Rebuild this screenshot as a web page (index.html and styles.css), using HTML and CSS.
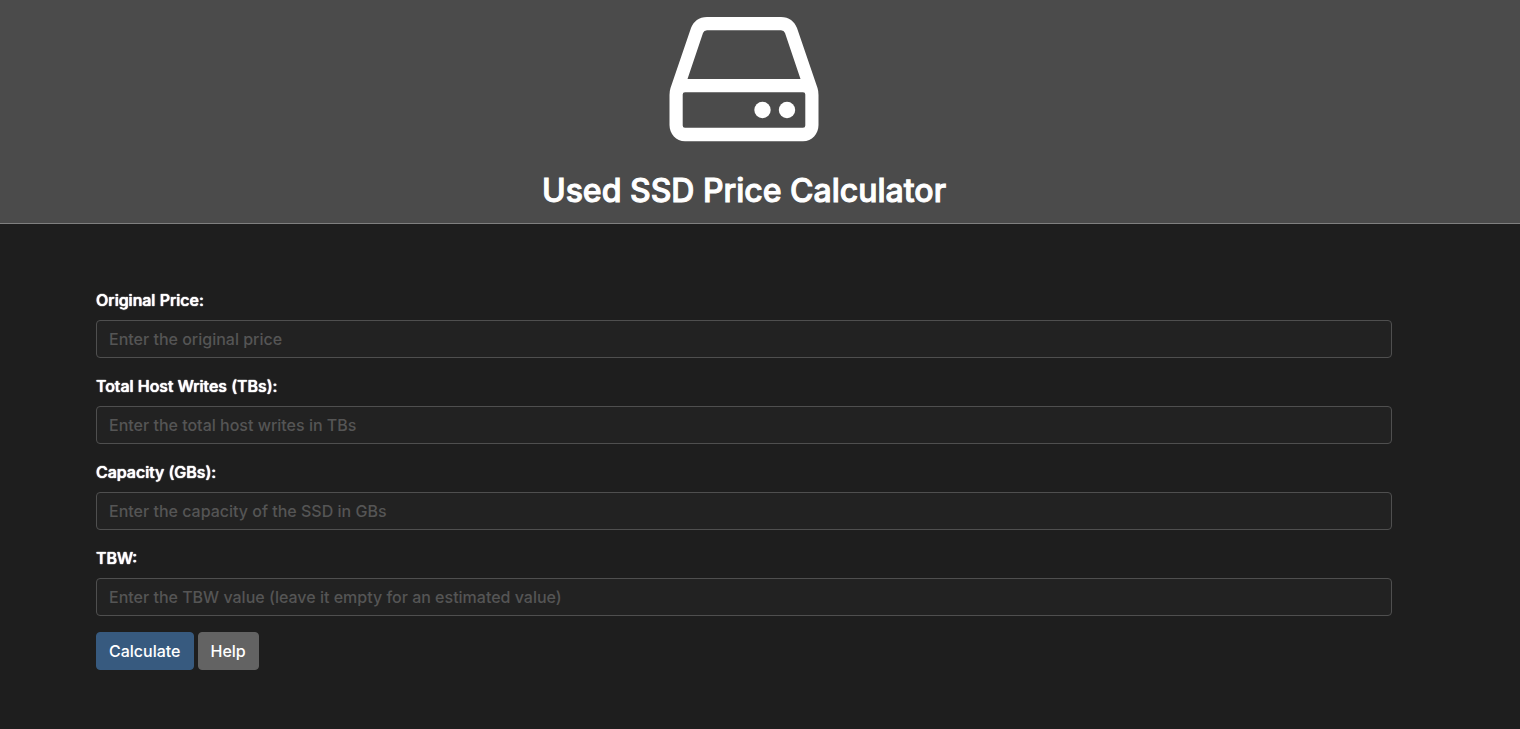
FILE: index.html
```
<!DOCTYPE html>
<html lang="en">
<head>
<meta charset="utf-8">
<title>Used SSD Price Calculator</title>
<link rel="stylesheet" href="styles.css">
</head>
<body>
<header class="header">
  <svg class="logo" viewBox="0 0 150 126" aria-hidden="true">
    <path class="logo-case" fill-rule="evenodd" d="M38 1 H112 C120 1 125.500 5.500 128 12 L148.500 72 Q149.500 75 149.500 79 V109 C149.500 118 143 125.300 134 125.300 H16 C7 125.300 .5 118 .5 109 V79 Q.5 75 1.500 72 L22 12 C24.500 5.500 30 1 38 1 Z M38 14.300 Q35 14.300 34 17 L18.500 63 H131.500 L116 17 Q115 14.300 112 14.300 Z M16 76.300 Q13.700 76.300 13.700 78.500 V109.500 Q13.700 111.800 16 111.800 H134 Q136.300 111.800 136.300 109.500 V78.500 Q136.300 76.300 134 76.300 Z"/>
    <circle class="logo-light" cx="93.500" cy="94" r="8.200"/>
    <circle class="logo-light" cx="118" cy="94" r="8.200"/>
  </svg>
  <h1 class="title">Used SSD Price Calculator</h1>
</header>
<main class="content">
  <form class="form">
    <div class="field">
      <label class="label" for="price">Original Price:</label>
      <input class="input" id="price" type="text" placeholder="Enter the original price">
    </div>
    <div class="field">
      <label class="label" for="writes">Total Host Writes (TBs):</label>
      <input class="input" id="writes" type="text" placeholder="Enter the total host writes in TBs">
    </div>
    <div class="field">
      <label class="label" for="capacity">Capacity (GBs):</label>
      <input class="input" id="capacity" type="text" placeholder="Enter the capacity of the SSD in GBs">
    </div>
    <div class="field">
      <label class="label" for="tbw">TBW:</label>
      <input class="input" id="tbw" type="text" placeholder="Enter the TBW value (leave it empty for an estimated value)">
    </div>
    <div class="actions">
      <button class="button button-primary" type="button">Calculate</button>
      <button class="button button-secondary" type="button">Help</button>
    </div>
  </form>
</main>
</body>
</html>
```
FILE: styles.css
```
* { box-sizing: border-box; }
body {
  margin: 0;
  min-height: 100vh;
  background: #1e1e1e;
  color: #fff;
  font: 500 16px/24px Inter, sans-serif;
}
.header {
  display: flex;
  flex-direction: column;
  align-items: center;
  gap: 28px;
  padding: 16px 32px 12px 0;
  background: #4b4b4b;
  border-bottom: 1px solid #808080;
}
.logo { display: block; width: 150px; height: 126px; }
.logo-case, .logo-light { fill: #fff; }
.title { margin: 0; font-size: 32px; line-height: 41px; font-weight: 500; -webkit-text-stroke: 1px #fff; }
.content { padding: 64px 128px 58px 96px; }
.field { margin-bottom: 16px; }
.label { display: block; margin-bottom: 8px; text-shadow: 0 0 1px #fff, 0 0 1px #fff; }
.input {
  display: block;
  width: 100%;
  height: 38px;
  padding: 6px 12px;
  border: 1px solid #4f4f4f;
  border-radius: 4px;
  background: #222;
  color: #fff;
  font: inherit;
}
.input::placeholder { color: #555; opacity: 1; }
.actions { display: flex; gap: 4px; }
.button {
  height: 38px;
  padding: 6px 12px;
  border: 1px solid transparent;
  border-radius: 4px;
  color: #fff;
  font: inherit;
}
.button-primary { background: #375a7f; border-color: #375a7f; }
.button-secondary { background: #636363; border-color: #636363; }
```
